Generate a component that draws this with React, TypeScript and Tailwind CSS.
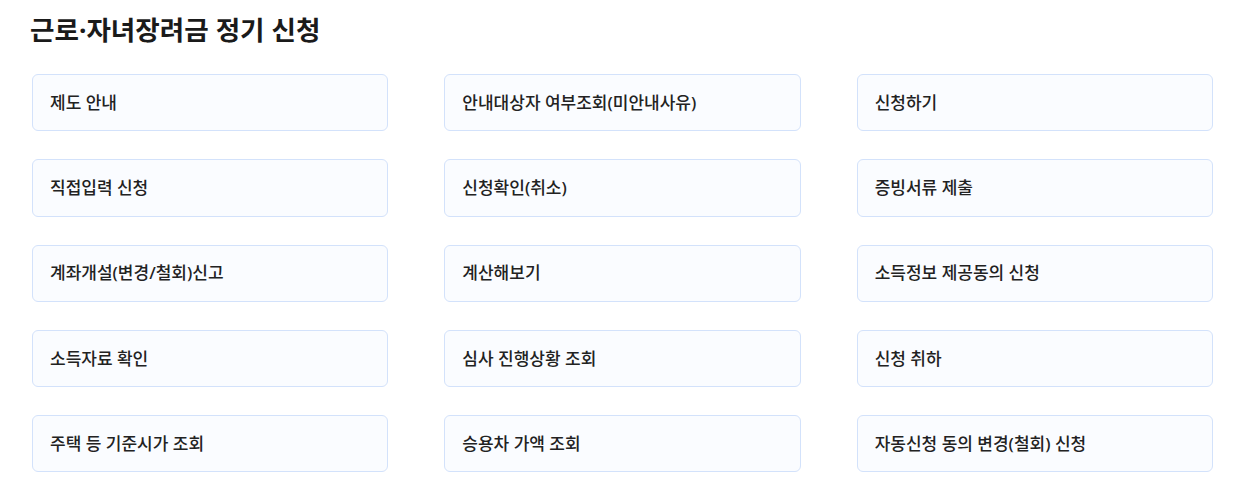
import React from "react";

const menus = [
  "제도 안내",
  "안내대상자 여부조회(미안내사유)",
  "신청하기",
  "직접입력 신청",
  "신청확인(취소)",
  "증빙서류 제출",
  "계좌개설(변경/철회)신고",
  "계산해보기",
  "소득정보 제공동의 신청",
  "소득자료 확인",
  "심사 진행상황 조회",
  "신청 취하",
  "주택 등 기준시가 조회",
  "승용차 가액 조회",
  "자동신청 동의 변경(철회) 신청",
];

export default function App() {
  return (
    <div
      className="min-h-screen bg-white pl-[32px] pr-[25px] pt-[12px]"
      style={{ fontFamily: '"Noto Sans", "Noto Sans CJK KR", sans-serif' }}
    >
      <h1 className="-ml-[2px] text-[26.6px] font-bold leading-[36px] text-[#1a1a1a]">
        근로·자녀장려금 정기 신청
      </h1>
      <div className="mt-[26px] grid grid-cols-3 gap-x-[56px] gap-y-[28px]">
        {menus.map((label) => (
          <a
            key={label}
            href="#"
            className="flex h-[57.3px] items-center rounded-[6px] border border-[#d3e2fb] bg-[#fafcff] px-[17px] text-[17px] font-medium text-[#222222]"
          >
            {label}
          </a>
        ))}
      </div>
    </div>
  );
}
